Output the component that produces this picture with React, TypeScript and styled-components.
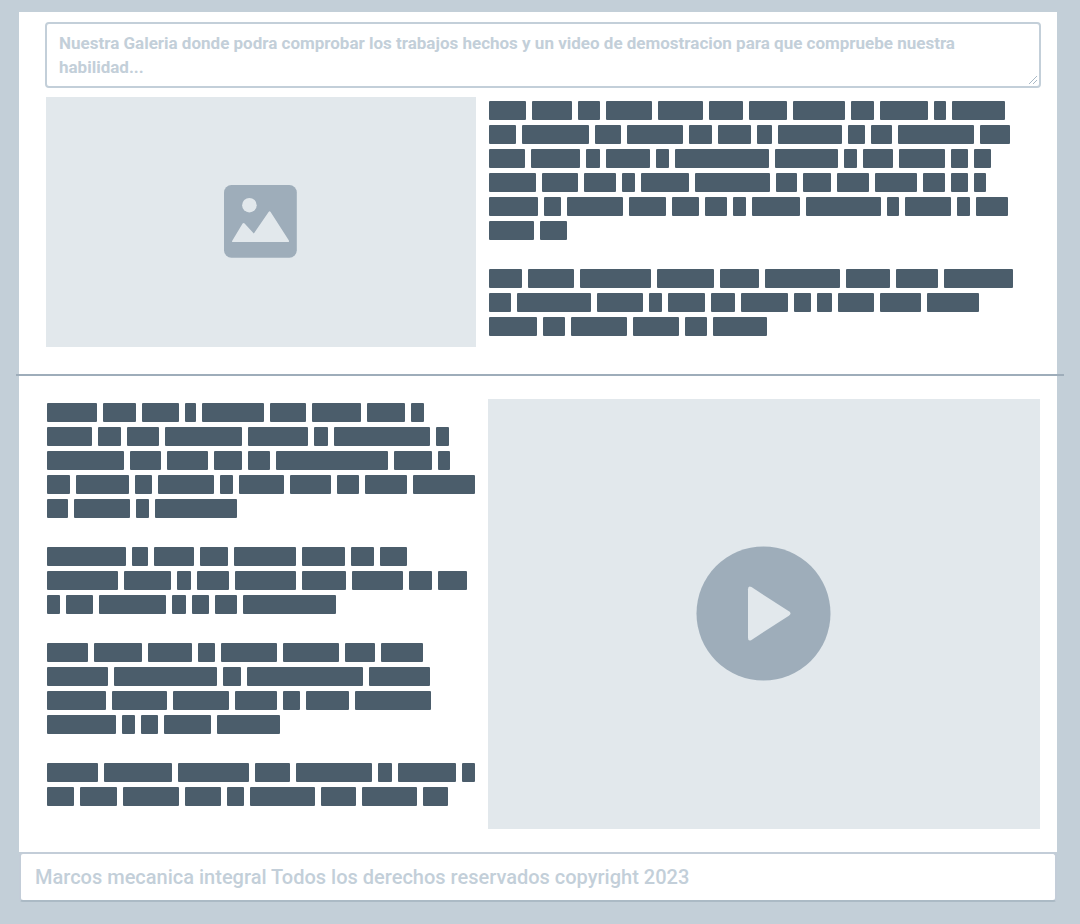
import React from "react";
import styled, { createGlobalStyle } from "styled-components";

const colors = {
  page: "#c3cfd8",
  panel: "#ffffff",
  media: "#e2e8ec",
  glyph: "#9eadba",
  ink: "#4b5d6b",
  hint: "#c3cfd9",
};

const GlobalStyle = createGlobalStyle`
  * { box-sizing: border-box; }
  body {
    margin: 0;
    background: ${colors.page};
    font-family: Roboto, "Liberation Sans", sans-serif;
  }
`;

const Page = styled.div`
  padding: 12px 23px 22px 19px;
`;

const Panel = styled.main`
  padding: 10px 16px 23px 26px;
  background: ${colors.panel};
`;

const IntroField = styled.div`
  position: relative;
  margin-bottom: 9px;
`;

const IntroText = styled.textarea`
  display: block;
  width: 100%;
  height: 66px;
  padding: 7px 12px;
  border: 2px solid ${colors.hint};
  border-radius: 4px;
  background: ${colors.panel};
  color: ${colors.hint};
  font: 700 17px/24px Roboto, "Liberation Sans", sans-serif;
  resize: none;
  overflow: hidden;
  outline: none;

  &::placeholder {
    color: ${colors.hint};
    opacity: 1;
  }
`;

const Grip = styled.svg`
  position: absolute;
  right: 3px;
  bottom: 3px;
  pointer-events: none;
`;

const Section = styled.section`
  display: grid;
  grid-template-columns: 430fr 552fr;
  column-gap: 12px;
  padding: 0 1px;
`;

const Media = styled.div<{ $height: number }>`
  display: flex;
  align-items: center;
  justify-content: center;
  height: ${(p) => p.$height}px;
  background: ${colors.media};
`;

const PlayButton = styled.button`
  display: block;
  padding: 0;
  border: 0;
  border-radius: 50%;
  background: none;
  cursor: pointer;

  svg {
    display: block;
    overflow: visible;
  }
`;

const Divider = styled.hr`
  height: 2px;
  margin: 27px -23px 23px -29px;
  border: 0;
  background: ${colors.glyph};
`;

const Copy = styled.div`
  display: flex;
  flex-direction: column;
  gap: 29px;
  min-width: 0;
  padding: 4px 0 0 1px;
`;

const Paragraph = styled.div`
  display: flex;
  flex-direction: column;
  gap: 5px;
`;

const Line = styled.div`
  display: flex;
  gap: 6px;
`;

const Word = styled.span<{ $width: number }>`
  width: ${(p) => p.$width}px;
  height: 19px;
  border-radius: 1px;
  background: ${colors.ink};
`;

const FooterText = styled.input`
  display: block;
  width: 100%;
  height: 50px;
  padding: 0 14px;
  border: 2px solid #c3cdd8;
  border-bottom-color: #abbac5;
  border-radius: 4px;
  background: ${colors.panel};
  color: ${colors.hint};
  font: 500 20px/24px Roboto, "Liberation Sans", sans-serif;
  outline: none;

  &::placeholder {
    color: ${colors.hint};
    opacity: 1;
  }
`;

type Text = number[][][];

const galleryCopy: Text = [
  [
    [37, 40, 22, 46, 45, 34, 38, 52, 23, 48, 12, 53],
    [27, 67, 26, 56, 23, 33, 15, 64, 17, 21, 76, 30],
    [36, 49, 14, 44, 13, 94, 63, 13, 30, 46, 17, 17],
    [47, 36, 32, 13, 48, 75, 21, 28, 32, 42, 22, 17, 12],
    [49, 17, 56, 37, 27, 22, 13, 48, 75, 12, 46, 13, 32],
    [45, 27],
  ],
  [
    [33, 46, 71, 57, 39, 75, 44, 42, 69],
    [22, 74, 46, 13, 37, 24, 47, 17, 15, 36, 41, 52],
    [48, 22, 56, 46, 22, 54],
  ],
];

const videoCopy: Text = [
  [
    [50, 33, 37, 11, 62, 36, 49, 38, 13],
    [45, 23, 32, 77, 60, 14, 96, 13],
    [77, 31, 41, 28, 22, 112, 38, 12],
    [23, 53, 17, 56, 13, 45, 41, 22, 42, 62],
    [21, 56, 13, 82],
  ],
  [
    [79, 16, 40, 28, 62, 43, 23, 27],
    [71, 47, 14, 32, 61, 44, 51, 23, 29],
    [13, 27, 67, 14, 17, 22, 93],
  ],
  [
    [41, 48, 44, 17, 56, 56, 30, 42],
    [61, 103, 18, 116, 61],
    [59, 55, 56, 42, 17, 43, 76],
    [69, 13, 17, 47, 63],
  ],
  [
    [51, 68, 71, 35, 76, 14, 58, 13],
    [27, 37, 56, 36, 17, 65, 35, 55, 25],
  ],
];

function BlockText({ text }: { text: Text }) {
  return (
    <Copy aria-hidden="true">
      {text.map((lines, p) => (
        <Paragraph key={p}>
          {lines.map((words, l) => (
            <Line key={l}>
              {words.map((width, w) => (
                <Word key={w} $width={width} />
              ))}
            </Line>
          ))}
        </Paragraph>
      ))}
    </Copy>
  );
}

function PictureIcon() {
  return (
    <svg width="74" height="74" viewBox="0.6 0.6 74 74" aria-hidden="true">
      <rect x="0.6" y="0.6" width="72.8" height="72.8" rx="7.5" fill={colors.glyph} />
      <circle cx="26" cy="20.8" r="7.3" fill={colors.media} />
      <path
        d="M9 56.2 L19.2 39.2 Q20.2 37.8 21.2 39.2 L30.4 49.2 L45.2 27.6 Q46.2 26.2 47.2 27.6 L65.5 56 Q66 57.7 64.6 57.7 H9.6 Q8 57.7 9 56.2 Z"
        fill={colors.media}
      />
    </svg>
  );
}

function PlayIcon() {
  return (
    <svg width="134" height="134" viewBox="0.5 0.5 134 134" aria-hidden="true">
      <circle cx="67" cy="67" r="67" fill={colors.glyph} />
      <path
        d="M51.5 42.8 Q51.5 38.9 55 40.6 L92.4 64.8 Q95.6 67 92.4 69.2 L55 93.4 Q51.5 95.1 51.5 91.2 Z"
        fill={colors.media}
      />
    </svg>
  );
}

export default function App() {
  return (
    <>
      <GlobalStyle />
      <Page>
        <Panel>
          <IntroField>
            <IntroText
              aria-label="Galeria"
              placeholder="Nuestra Galeria donde podra comprobar los trabajos hechos y un video de demostracion para que compruebe nuestra habilidad..."
            />
            <Grip width="10" height="10" viewBox="0 0 10 10" aria-hidden="true">
              <path d="M1 9 L9 1 M5 9 L9 5" stroke="#a9b9c6" strokeWidth="1" fill="none" />
            </Grip>
          </IntroField>
          <Section>
            <Media $height={250}>
              <PictureIcon />
            </Media>
            <BlockText text={galleryCopy} />
          </Section>
          <Divider />
          <Section>
            <BlockText text={videoCopy} />
            <Media $height={430}>
              <PlayButton type="button" aria-label="Reproducir video">
                <PlayIcon />
              </PlayButton>
            </Media>
          </Section>
        </Panel>
        <footer>
          <FooterText
            aria-label="Copyright"
            placeholder="Marcos mecanica integral Todos los derechos reservados copyright 2023"
          />
        </footer>
      </Page>
    </>
  );
}
